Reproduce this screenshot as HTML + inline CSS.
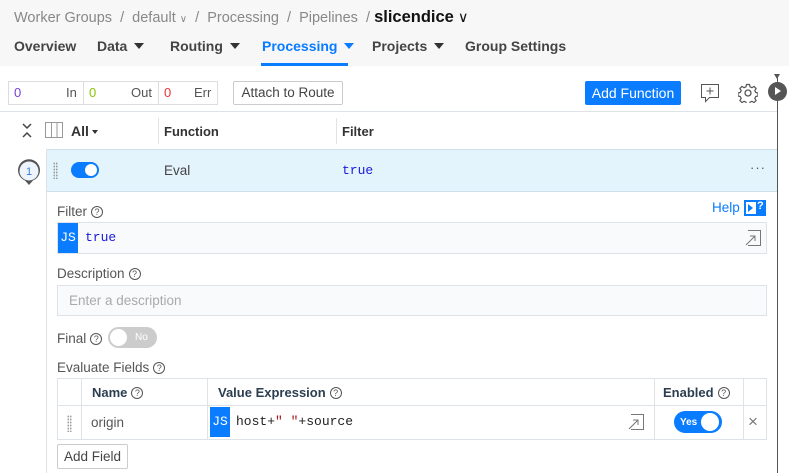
<!DOCTYPE html>
<html><head><meta charset="utf-8"><style>
*{box-sizing:border-box;margin:0;padding:0}
body{width:789px;height:473px;overflow:hidden;background:#fff;font-family:"Liberation Sans",sans-serif;color:#333;font-size:13px;position:relative}
.a{position:absolute;white-space:nowrap}
.mono{font-family:"Liberation Mono",monospace}
.q{display:inline-block;width:12px;height:12px;border:1px solid #555;border-radius:50%;font-size:9px;line-height:10px;text-align:center;color:#555;vertical-align:1px;margin-left:4px;font-weight:normal}
.tri{display:inline-block;width:0;height:0;border-left:5px solid transparent;border-right:5px solid transparent;border-top:6px solid #333;margin-left:7px;vertical-align:2px}
.lbl{color:#555;font-size:13.5px}
.tab{top:38px;font-size:14px;color:#444;font-weight:bold}
.js{background:#0a7cff;color:#fff;font-family:"Liberation Mono",monospace;font-size:13px;text-align:center}
.th{top:385px;color:#2c3e50;font-weight:bold;font-size:13px}
</style></head><body>
<div class="a" style="left:0;top:0;width:789px;height:66px;background:#f7f7f7"></div>
<div class="a" style="left:14px;top:8px;font-size:14.5px;color:#888">Worker Groups &nbsp;/&nbsp; default <span style="font-size:10px">∨</span> &nbsp;/&nbsp; Processing &nbsp;/&nbsp; Pipelines &nbsp;/ <span style="color:#111;font-size:16.5px;font-weight:bold">slicendice</span> <span style="color:#111">∨</span></div>
<div class="a tab" style="left:14px">Overview</div>
<div class="a tab" style="left:97px">Data<span class="tri"></span></div>
<div class="a tab" style="left:170px">Routing<span class="tri"></span></div>
<div class="a tab" style="left:262px;color:#0a7cff">Processing<span class="tri" style="border-top-color:#0a7cff"></span></div>
<div class="a" style="left:261px;top:63px;width:87px;height:3px;background:#0a7cff"></div>
<div class="a tab" style="left:372px">Projects<span class="tri"></span></div>
<div class="a tab" style="left:465px">Group Settings</div>

<div class="a" style="left:8px;top:81px;width:210px;height:24px;border:1px solid #ddd"></div>
<div class="a" style="left:83px;top:81px;width:1px;height:24px;background:#ddd"></div>
<div class="a" style="left:158px;top:81px;width:1px;height:24px;background:#ddd"></div>
<div class="a" style="left:14px;top:85px;color:#7a3fd0">0</div><div class="a" style="left:66px;top:85px;color:#555">In</div>
<div class="a" style="left:89px;top:85px;color:#8bc400">0</div><div class="a" style="left:131px;top:85px;color:#555">Out</div>
<div class="a" style="left:164px;top:85px;color:#e33">0</div><div class="a" style="left:194px;top:85px;color:#555">Err</div>
<div class="a" style="left:233px;top:81px;width:110px;height:24px;border:1px solid #ccc;border-radius:2px;color:#444;text-align:center;line-height:22px;font-size:13.5px">Attach to Route</div>
<div class="a" style="left:585px;top:81px;width:96px;height:24px;background:#0a7cff;border-radius:2px;color:#fff;text-align:center;line-height:24px;font-size:14px">Add Function</div>
<svg class="a" style="left:700px;top:83px" width="20" height="20"><path d="M1.5 1.5h17v13h-9l-4 4v-4h-4z" fill="none" stroke="#555"/><path d="M10 4.5v7M6.5 8h7" stroke="#555"/></svg>
<svg class="a" style="left:738px;top:83px" width="20" height="20" viewBox="0 0 20 20"><circle cx="10" cy="10" r="3" fill="none" stroke="#555" stroke-width="1.3"/><path d="M8.5 1.5h3l.5 2.3 2 .9 2-1.3 2.1 2.1-1.3 2 .9 2 2.3.5v3l-2.3.5-.9 2 1.3 2-2.1 2.1-2-1.3-2 .9-.5 2.3h-3l-.5-2.3-2-.9-2 1.3-2.1-2.1 1.3-2-.9-2-2.3-.5v-3l2.3-.5.9-2-1.3-2 2.1-2.1 2 1.3 2-.9z" fill="none" stroke="#555" stroke-width="1.2"/></svg>
<div class="a" style="left:777px;top:75px;width:1px;height:398px;background:#555"></div>
<div class="a" style="left:774px;top:74px;border-left:3.5px solid transparent;border-right:3.5px solid transparent;border-top:5px solid #555"></div>
<div class="a" style="left:768px;top:82px;width:19px;height:19px;border-radius:50%;background:#555"></div>
<div class="a" style="left:775px;top:87px;border-top:4.5px solid transparent;border-bottom:4.5px solid transparent;border-left:6px solid #fff"></div>

<div class="a" style="left:0;top:111px;width:777px;height:1px;background:#dde3e8"></div>
<svg class="a" style="left:21px;top:122px" width="12" height="18"><path d="M2 2l4 4 4-4M2 15l4-4 4 4" fill="none" stroke="#444" stroke-width="1.5"/></svg>
<svg class="a" style="left:45px;top:122px" width="19" height="17"><rect x=".5" y=".5" width="17" height="15" fill="none" stroke="#999"/><path d="M6.5 1v15M12 1v15" stroke="#999"/></svg>
<div class="a" style="left:71px;top:123px;color:#333;font-size:14px;font-weight:bold">All<span class="tri" style="border-width:4px 3px 0;margin-left:3px"></span></div>
<div class="a" style="left:158px;top:118px;width:1px;height:26px;background:#e3e3e3"></div>
<div class="a" style="left:336px;top:118px;width:1px;height:26px;background:#e3e3e3"></div>
<div class="a" style="left:164px;top:124px;color:#333;font-weight:bold">Function</div>
<div class="a" style="left:342px;top:124px;color:#333;font-weight:bold">Filter</div>
<div class="a" style="left:46px;top:149px;width:731px;height:43px;background:#e3f4fd;border-top:1px solid #cde0ea;border-bottom:1px solid #cde0ea"></div>
<div class="a" style="left:46px;top:149px;width:1px;height:324px;background:#dde3e8"></div>
<svg class="a" style="left:16px;top:158px" width="26" height="30"><path d="M13 27l-4-4.5A11 11 0 1 1 17 22.5z" fill="#555"/><circle cx="13" cy="13" r="9.5" fill="#eef4fb"/><text x="13" y="17" font-size="11" text-anchor="middle" fill="#3a7bd5" font-family="Liberation Sans">1</text></svg>
<div class="a" style="left:53px;top:162px;width:5px;height:17px;background:radial-gradient(circle,#999 .8px,transparent 1px) 0 0/2.5px 3px"></div>
<div class="a" style="left:71px;top:162px;width:28px;height:16px;border-radius:8px;background:#0a7cff"></div>
<div class="a" style="left:85px;top:164px;width:12px;height:12px;border-radius:50%;background:#fff"></div>
<div class="a" style="left:164px;top:163px;color:#444;font-size:13.5px">Eval</div>
<div class="a mono" style="left:342px;top:163px;color:#1a1adc">true</div>
<div class="a" style="left:750px;top:160px;color:#555;letter-spacing:1px">···</div>

<div class="a lbl" style="left:57px;top:204px">Filter<span class="q">?</span></div>
<div class="a" style="left:712px;top:200px;color:#0a7cff;font-size:13.5px">Help</div>
<div class="a" style="left:744px;top:200px;width:22px;height:16px;border:1.5px solid #0a7cff;background:#0a7cff"></div>
<div class="a" style="left:746px;top:202px;width:10px;height:12px;background:#fff"></div>
<div class="a" style="left:748px;top:204px;border-top:4px solid transparent;border-bottom:4px solid transparent;border-left:5px solid #0a7cff"></div>
<div class="a" style="left:757px;top:200px;color:#fff;font-size:11px;font-weight:bold">?</div>
<div class="a" style="left:57px;top:222px;width:710px;height:32px;border:1px solid #dde3e8;background:#f8fafc"></div>
<div class="a js" style="left:58px;top:223px;width:20px;height:30px;line-height:30px">JS</div>
<div class="a mono" style="left:85px;top:230px;color:#1a1adc">true</div>
<svg class="a" style="left:745px;top:230px" width="16" height="16"><path d="M3 .5h12.5v15H3M1 15l9-9M5 6h5v5" fill="none" stroke="#777"/></svg>

<div class="a lbl" style="left:57px;top:266px">Description<span class="q">?</span></div>
<div class="a" style="left:57px;top:285px;width:710px;height:31px;border:1px solid #dde3e8;background:#f8fafc"></div>
<div class="a" style="left:69px;top:293px;color:#aaa;font-size:13.5px">Enter a description</div>
<div class="a lbl" style="left:57px;top:331px">Final<span class="q">?</span></div>
<div class="a" style="left:108px;top:327px;width:49px;height:21px;border-radius:11px;background:#ccc"></div>
<div class="a" style="left:110px;top:329px;width:17px;height:17px;border-radius:50%;background:#fff"></div>
<div class="a" style="left:135px;top:332px;color:#fff;font-size:10px">No</div>
<div class="a lbl" style="left:57px;top:360px">Evaluate Fields<span class="q">?</span></div>

<div class="a" style="left:57px;top:378px;width:710px;height:62px;border:1px solid #dde3e8"></div>
<div class="a" style="left:57px;top:405px;width:710px;height:1px;background:#dde3e8"></div>
<div class="a" style="left:81px;top:378px;width:1px;height:62px;background:#dde3e8"></div>
<div class="a" style="left:207px;top:378px;width:1px;height:62px;background:#dde3e8"></div>
<div class="a" style="left:654px;top:378px;width:1px;height:62px;background:#dde3e8"></div>
<div class="a" style="left:743px;top:378px;width:1px;height:62px;background:#dde3e8"></div>
<div class="a th" style="left:92px">Name<span class="q">?</span></div>
<div class="a th" style="left:218px">Value Expression<span class="q">?</span></div>
<div class="a th" style="left:663px">Enabled<span class="q">?</span></div>
<div class="a" style="left:67px;top:415px;width:5px;height:17px;background:radial-gradient(circle,#999 .8px,transparent 1px) 0 0/2.5px 3px"></div>
<div class="a" style="left:91px;top:415px;color:#555;font-size:13.5px">origin</div>
<div class="a js" style="left:210px;top:407px;width:20px;height:30px;line-height:30px">JS</div>
<div class="a mono" style="left:236px;top:414px;color:#222">host+<span style="color:#a31515">" "</span>+source</div>
<svg class="a" style="left:628px;top:414px" width="16" height="16"><path d="M3 .5h12.5v15H3M1 15l9-9M5 6h5v5" fill="none" stroke="#777"/></svg>
<div class="a" style="left:674px;top:411px;width:48px;height:22px;border-radius:11px;background:#0a7cff"></div>
<div class="a" style="left:701px;top:413px;width:18px;height:18px;border-radius:50%;background:#fff"></div>
<div class="a" style="left:680px;top:417px;color:#fff;font-size:10px;font-weight:bold">Yes</div>
<div class="a" style="left:748px;top:412px;color:#777;font-size:17px">×</div>
<div class="a" style="left:57px;top:444px;width:71px;height:25px;border:1px solid #ccc;border-radius:2px;color:#444;text-align:center;line-height:23px;font-size:13.5px">Add Field</div>
</body></html>
